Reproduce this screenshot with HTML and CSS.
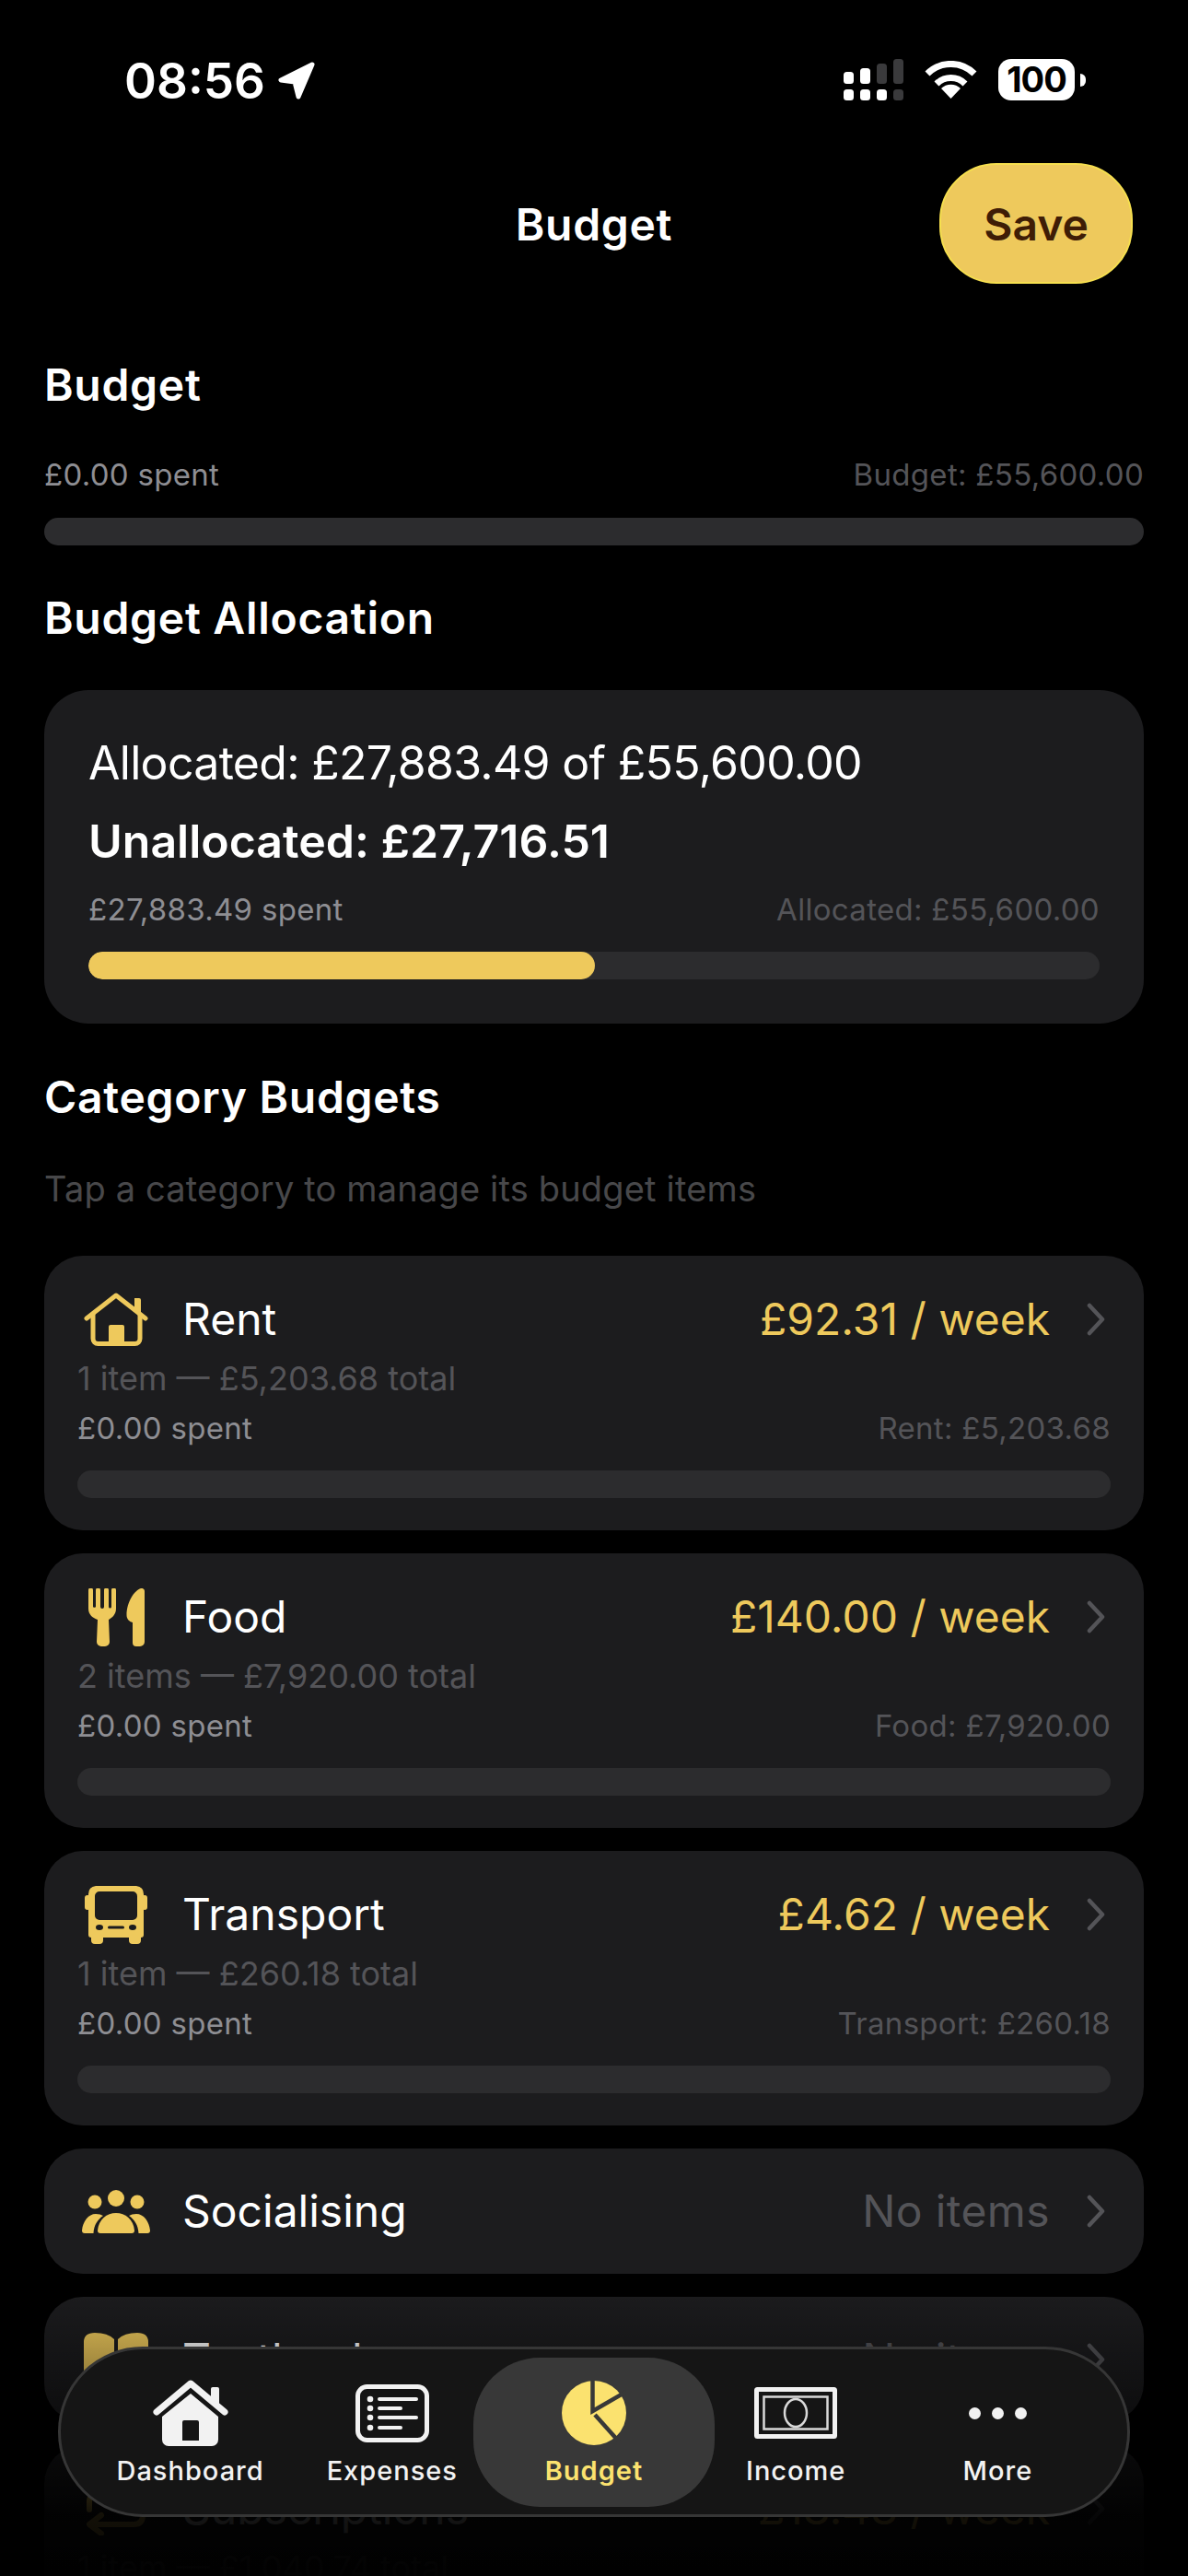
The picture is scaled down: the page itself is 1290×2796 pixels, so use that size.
FILE: index.html
```html
<!DOCTYPE html>
<html lang="en">
<head>
<meta charset="utf-8">
<title>Budget</title>
<link rel="stylesheet" href="styles.css">
</head>
<body>
<div class="screen">
  <div class="status">
    <div class="status-left">
      <span class="time">08:56</span>
      <svg class="loc" width="41" height="41" viewBox="0 0 41 41"><path d="M38 3 L4 20 L19 22 L23 38 Z" fill="#fff" stroke="#fff" stroke-width="5" stroke-linejoin="round"/></svg>
    </div>
    <div class="status-right">
      <svg width="65" height="45" viewBox="0 0 65 45"><g fill="#fff"><rect x="0" y="14" width="11" height="13" rx="3.5"/><rect x="18" y="10" width="11" height="17" rx="3.5"/><rect x="0" y="33" width="11" height="12" rx="3.5"/><rect x="18" y="33" width="11" height="12" rx="3.5"/><rect x="36" y="33" width="11" height="12" rx="3.5"/></g><g fill="#3a3a3c"><rect x="36" y="5" width="11" height="22" rx="3.5"/><rect x="54" y="0" width="11" height="27" rx="3.5"/><rect x="54" y="33" width="11" height="12" rx="3.5"/></g></svg>
      <svg width="57" height="41" viewBox="0 0 57 41"><g fill="none" stroke="#fff" stroke-width="7"><path d="M3 14 A36 36 0 0 1 54 14"/><path d="M13 25 A22 22 0 0 1 44 25"/></g><path d="M28.500 41 L18 30 A15 15 0 0 1 39 30 Z" fill="#fff"/></svg>
      <div class="battery"><span class="battery-body">100</span><span class="battery-cap"></span></div>
    </div>
  </div>

  <header class="topbar">
    <span></span>
    <h1 class="title">Budget</h1>
    <button class="save">Save</button>
  </header>

  <main class="content">
    <h2 class="section first">Budget</h2>
    <div class="meta meta-budget"><span class="spent">£0.00 spent</span><span class="limit">Budget: £55,600.00</span></div>
    <div class="track track-budget"></div>

    <h2 class="section allocation-title">Budget Allocation</h2>
    <section class="alloc">
      <p class="alloc-line">Allocated: £27,883.49 of £55,600.00</p>
      <p class="alloc-line strong">Unallocated: £27,716.51</p>
      <div class="meta meta-alloc"><span class="spent">£27,883.49 spent</span><span class="limit">Allocated: £55,600.00</span></div>
      <div class="track"><div class="fill" style="width:50.1%"></div></div>
    </section>

    <h2 class="section category-title">Category Budgets</h2>
    <p class="hint">Tap a category to manage its budget items</p>

    <div class="list">
      <article class="card">
        <div class="head">
          <div class="icon"><svg width="70" height="58" viewBox="0 0 70 58"><g fill="none" stroke="#eec95c" stroke-linecap="round" stroke-linejoin="round" stroke-width="5"><path d="M3 28 L35 3 L67 28"/><path d="M10 24 V50 a5.500 5.500 0 0 0 5.500 5.500 H55.500 a5.500 5.500 0 0 0 5.500 -5.500 V24"/></g><path d="M55 6 h5 a2 2 0 0 1 2 2 v15 l-7 -5 Z" fill="#eec95c"/><rect x="27" y="35" width="17" height="21" rx="2" fill="#eec95c"/></svg></div>
          <span class="name">Rent</span>
          <span class="value">£92.31 / week</span>
          <svg class="chev" width="20" height="36" viewBox="0 0 20 36"><path d="M3 3 L17 18 L3 33" fill="none" stroke="#545458" stroke-width="4.500" stroke-linecap="round" stroke-linejoin="round"/></svg>
        </div>
        <p class="sub">1 item — £5,203.68 total</p>
        <div class="meta meta-card"><span class="spent">£0.00 spent</span><span class="limit">Rent: £5,203.68</span></div>
        <div class="track"></div>
      </article>

      <article class="card">
        <div class="head">
          <div class="icon"><svg width="61" height="63" viewBox="0 0 61 63"><path fill="#eec95c" d="M0 2 a2.500 2.500 0 0 1 5 0 V20 a2 2 0 0 0 3 0 V2 a2.500 2.500 0 0 1 5 0 V20 a1.500 1.500 0 0 0 4 0 V2 a2.500 2.500 0 0 1 5 0 V20 a1.500 1.500 0 0 0 3 0 V2 a2.500 2.500 0 0 1 5 0 V22 C30 29 25 32 22 34 L23 58 a5 5 0 0 1 -5 5 H14 a5 5 0 0 1 -5 -5 L10 34 C5 32 0 29 0 22 Z"/><path fill="#eec95c" d="M61 3 V58 a5 5 0 0 1 -5 5 H52 a4 4 0 0 1 -4 -4 V37 C44 36 41.500 33 41.500 29 C41.500 15 50 2 57 0 C59 -0.500 61 1 61 3 Z"/></svg></div>
          <span class="name">Food</span>
          <span class="value">£140.00 / week</span>
          <svg class="chev" width="20" height="36" viewBox="0 0 20 36"><path d="M3 3 L17 18 L3 33" fill="none" stroke="#545458" stroke-width="4.500" stroke-linecap="round" stroke-linejoin="round"/></svg>
        </div>
        <p class="sub">2 items — £7,920.00 total</p>
        <div class="meta meta-card"><span class="spent">£0.00 spent</span><span class="limit">Food: £7,920.00</span></div>
        <div class="track"></div>
      </article>

      <article class="card">
        <div class="head">
          <div class="icon"><svg width="68" height="63" viewBox="0 0 68 63"><path fill="#eec95c" fill-rule="evenodd" d="M12 0 Q34 -2 56 0 Q64 1 64 9 V53 Q64 56 61 56 V59 a4 4 0 0 1 -4 4 H52 a4 4 0 0 1 -4 -4 V56 H20 V59 a4 4 0 0 1 -4 4 H11 a4 4 0 0 1 -4 -4 V56 Q4 56 4 53 V9 Q4 1 12 0 Z M16 6 a5 5 0 0 0 -5 5 V32 a5 5 0 0 0 5 5 H52 a5 5 0 0 0 5 -5 V11 a5 5 0 0 0 -5 -5 Z"/><rect x="0" y="10" width="6" height="16" rx="3" fill="#eec95c"/><rect x="62" y="10" width="6" height="16" rx="3" fill="#eec95c"/><ellipse cx="16" cy="45" rx="4" ry="3" fill="#1c1c1e"/><ellipse cx="52" cy="45" rx="4" ry="3" fill="#1c1c1e"/><rect x="25" y="43.500" width="18" height="3" rx="1.500" fill="#1c1c1e"/></svg></div>
          <span class="name">Transport</span>
          <span class="value">£4.62 / week</span>
          <svg class="chev" width="20" height="36" viewBox="0 0 20 36"><path d="M3 3 L17 18 L3 33" fill="none" stroke="#545458" stroke-width="4.500" stroke-linecap="round" stroke-linejoin="round"/></svg>
        </div>
        <p class="sub">1 item — £260.18 total</p>
        <div class="meta meta-card"><span class="spent">£0.00 spent</span><span class="limit">Transport: £260.18</span></div>
        <div class="track"></div>
      </article>

      <article class="card compact">
        <div class="head">
          <div class="icon"><svg width="74" height="47" viewBox="0 0 74 47"><g fill="#eec95c"><circle cx="37" cy="9" r="9"/><circle cx="14" cy="13" r="7.500"/><circle cx="60" cy="13" r="7.500"/><path d="M20 47 Q17 47 17 44 C18 32 27 25 37 25 C47 25 56 32 57 44 Q57 47 54 47 Z"/><path d="M3 47 Q0 47 0 44 C1 34 7 26 15 26 Q20 26 23 28 C17 32 13 38 12.500 47 Z"/><path d="M71 47 Q74 47 74 44 C73 34 67 26 59 26 Q54 26 51 28 C57 32 61 38 61.500 47 Z"/></g></svg></div>
          <span class="name">Socialising</span>
          <span class="value none">No items</span>
          <svg class="chev" width="20" height="36" viewBox="0 0 20 36"><path d="M3 3 L17 18 L3 33" fill="none" stroke="#545458" stroke-width="4.500" stroke-linecap="round" stroke-linejoin="round"/></svg>
        </div>
      </article>

      <article class="card compact">
        <div class="head">
          <div class="icon"><svg width="70" height="58" viewBox="0 0 70 58"><g fill="#eec95c"><path d="M0 10 Q0 0 12 0 Q26 0 33 7 V56 Q26 50 12 50 H4 Q0 50 0 46 Z"/><path d="M70 10 Q70 0 58 0 Q44 0 37 7 V56 Q44 50 58 50 H66 Q70 50 70 46 Z"/></g></svg></div>
          <span class="name">Textbooks</span>
          <span class="value none">No items</span>
          <svg class="chev" width="20" height="36" viewBox="0 0 20 36"><path d="M3 3 L17 18 L3 33" fill="none" stroke="#545458" stroke-width="4.500" stroke-linecap="round" stroke-linejoin="round"/></svg>
        </div>
      </article>

      <article class="card">
        <div class="head">
          <div class="icon"><svg width="68" height="58" viewBox="0 0 68 58"><g fill="none" stroke="#eec95c" stroke-width="6" stroke-linecap="round" stroke-linejoin="round"><path d="M5 30 V22 Q5 12 15 12 H62"/><path d="M50 2 L63 12 L50 22"/><path d="M63 28 V36 Q63 46 53 46 H6"/><path d="M18 36 L5 46 L18 56"/></g></svg></div>
          <span class="name">Subscriptions</span>
          <span class="value">£18.48 / week</span>
          <svg class="chev" width="20" height="36" viewBox="0 0 20 36"><path d="M3 3 L17 18 L3 33" fill="none" stroke="#545458" stroke-width="4.500" stroke-linecap="round" stroke-linejoin="round"/></svg>
        </div>
        <p class="sub">1 item — £1,040.74 total</p>
      </article>
    </div>
  </main>

  <div class="fade"></div>

  <nav class="tabs">
    <a class="tab">
      <span class="tab-icon"><svg width="82" height="72" viewBox="0 0 82 72"><path d="M4 35 L41 4 L78 35" fill="none" stroke="#f2f2f2" stroke-width="7" stroke-linecap="round" stroke-linejoin="round"/><path d="M63 10 a2 2 0 0 1 2 -2 h5 a2 2 0 0 1 2 2 v18 l-9 -7 Z" fill="#f2f2f2"/><path fill="#f2f2f2" fill-rule="evenodd" d="M41 15 L71 40 V65 a7 7 0 0 1 -7 7 H17 a7 7 0 0 1 -7 -7 V40 Z M34 44 a2 2 0 0 0 -2 2 V66 H50 V46 a2 2 0 0 0 -2 -2 Z"/></svg></span>
      <span class="tab-label">Dashboard</span>
    </a>
    <a class="tab">
      <span class="tab-icon"><svg width="80" height="63" viewBox="0 0 80 63"><rect x="2.500" y="2.500" width="75" height="58" rx="10" fill="none" stroke="#f2f2f2" stroke-width="5"/><g fill="#f2f2f2"><circle cx="16" cy="16" r="3.300"/><circle cx="16" cy="26" r="3.300"/><circle cx="16" cy="36" r="3.300"/><circle cx="16" cy="47" r="3.300"/></g><g stroke="#f2f2f2" stroke-width="4" stroke-linecap="round"><path d="M26 16 H66"/><path d="M26 26 H49"/><path d="M26 36 H66"/><path d="M26 47 H49"/></g></svg></span>
      <span class="tab-label">Expenses</span>
    </a>
    <a class="tab active">
      <span class="tab-icon"><svg width="70" height="70" viewBox="0 0 70 70"><circle cx="35" cy="35" r="35" fill="#fbe26f"/><g fill="none" stroke="#383838" stroke-width="4.500"><path d="M33.500 -2 V33 L70 12"/><path d="M36 37 L62 66"/></g></svg></span>
      <span class="tab-label">Budget</span>
    </a>
    <a class="tab">
      <span class="tab-icon"><svg width="90" height="56" viewBox="0 0 90 56"><rect x="2.500" y="2.500" width="85" height="51" rx="1" fill="none" stroke="#f2f2f2" stroke-width="5"/><rect x="10.500" y="10.500" width="69" height="35" fill="none" stroke="#d9d9d9" stroke-width="2.500"/><ellipse cx="45" cy="28" rx="12" ry="15" fill="none" stroke="#d9d9d9" stroke-width="2.500"/></svg></span>
      <span class="tab-label">Income</span>
    </a>
    <a class="tab">
      <span class="tab-icon"><svg width="63" height="13" viewBox="0 0 63 13"><g fill="#f2f2f2"><circle cx="6.500" cy="6.500" r="6.500"/><circle cx="31.500" cy="6.500" r="6.500"/><circle cx="56.500" cy="6.500" r="6.500"/></g></svg></span>
      <span class="tab-label">More</span>
    </a>
  </nav>
</div>
</body>
</html>
```

FILE: styles.css
```css
* { box-sizing: border-box; }
html, body { margin: 0; padding: 0; background: #000; }
body { font-family: Inter, "Noto Sans", "Liberation Sans", sans-serif; color: #fff; }
h1, h2, p { margin: 0; font-weight: inherit; }

.screen { position: relative; width: 1290px; height: 2796px; overflow: hidden; background: #000; }

/* status bar */
.status { height: 177px; padding: 56px 111px 0 135px; display: flex; justify-content: space-between; align-items: flex-start; }
.status-left { display: flex; align-items: flex-start; gap: 13px; }
.time { font-size: 53px; line-height: 64px; font-weight: 600; }
.loc { margin-top: 11px; }
.status-right { display: flex; align-items: flex-start; gap: 23px; padding-top: 8px; }
.status-right svg:nth-child(2) { margin-top: 2px; }
.battery { display: flex; align-items: center; gap: 6px; }
.battery-body { width: 83px; height: 45px; border-radius: 14px; background: #fff; color: #000; font-size: 38px; line-height: 45px; font-weight: 700; text-align: center; letter-spacing: -1px; }
.battery-cap { width: 6px; height: 14px; background: #fff; border-radius: 0 6px 6px 0; }

/* top bar */
.topbar { height: 131px; padding: 0 60px; display: grid; grid-template-columns: 1fr auto 1fr; align-items: center; }
.title { font-size: 48px; line-height: 56px; font-weight: 600; letter-spacing: 0.7px; padding-top: 2px; }
.save { justify-self: end; width: 210px; height: 131px; border-radius: 62px; border: 2px solid #f6df4f; background: #eec95c; color: #3f1d06; font-family: inherit; font-size: 48px; font-weight: 600; padding: 1px 0 0; }

/* content */
.content { padding: 0 48px; }
.section { font-size: 48px; line-height: 56px; font-weight: 600; letter-spacing: 0.7px; }
.first { margin-top: 82px; }
.allocation-title { margin-top: 51px; }
.category-title { margin-top: 52px; }

.meta { display: flex; justify-content: space-between; font-size: 33px; line-height: 40px; letter-spacing: 0.3px; }
.spent { color: #8e8e93; }
.limit { color: #545458; }
.meta-budget { margin-top: 49px; }
.meta-alloc { margin-top: 24px; }
.meta-card { margin-top: 12px; }

.track { height: 30px; border-radius: 15px; background: #2c2c2e; margin-top: 26px; overflow: hidden; }
.track-budget { margin-top: 27px; }
.fill { height: 100%; border-radius: 15px; background: #eec95c; }

.alloc { margin-top: 50px; padding: 49px 48px 48px; border-radius: 48px; background: #1c1c1e; }
.alloc-line { font-size: 50px; line-height: 60px; letter-spacing: -0.7px; }
.alloc-line.strong { font-weight: 600; margin-top: 25px; letter-spacing: 0; }

.hint { margin-top: 48px; font-size: 38px; line-height: 46px; letter-spacing: 0.17px; color: #48484a; }

.list { margin-top: 50px; display: flex; flex-direction: column; gap: 25px; }
.card { padding: 39px 36px 35px; border-radius: 42px; background: #1c1c1e; }
.card.compact { padding: 38px 36px; }
.head { height: 60px; display: flex; align-items: center; }
.icon { width: 84px; height: 60px; margin-right: 30px; display: flex; align-items: center; justify-content: center; flex: none; }
.name { font-size: 48px; line-height: 60px; flex: 1; }
.value { font-size: 48px; line-height: 60px; color: #eec95c; }
.value.none { color: #545458; letter-spacing: 0.4px; }
.chev { margin-left: 40px; margin-right: 6px; flex: none; }
.sub { margin-top: 12px; font-size: 36px; line-height: 44px; color: #545458; }

/* bottom fade */
.fade { position: absolute; left: 0; right: 0; top: 2480px; bottom: 0; background: linear-gradient(to bottom, rgba(0,0,0,0) 0, rgba(0,0,0,.92) 250px, rgba(0,0,0,.97) 316px); }

/* tab bar */
.tabs { position: absolute; left: 63px; top: 2547px; width: 1164px; height: 185px; padding: 9px 31px 8px; border: 3px solid #363636; border-radius: 92px; background: #151515; display: grid; grid-template-columns: repeat(5, 1fr); }
.tab { display: flex; flex-direction: column; align-items: center; padding-top: 24px; border-radius: 72px; }
.tab.active { margin: 0 -21px; background: #383838; }
.tab-icon { height: 72px; display: flex; align-items: center; justify-content: center; }
.tab-label { margin-top: 9px; font-size: 29px; line-height: 36px; font-weight: 500; letter-spacing: 1px; color: #f2f2f2; }
.active .tab-label { color: #fbe26f; font-weight: 600; }
```
